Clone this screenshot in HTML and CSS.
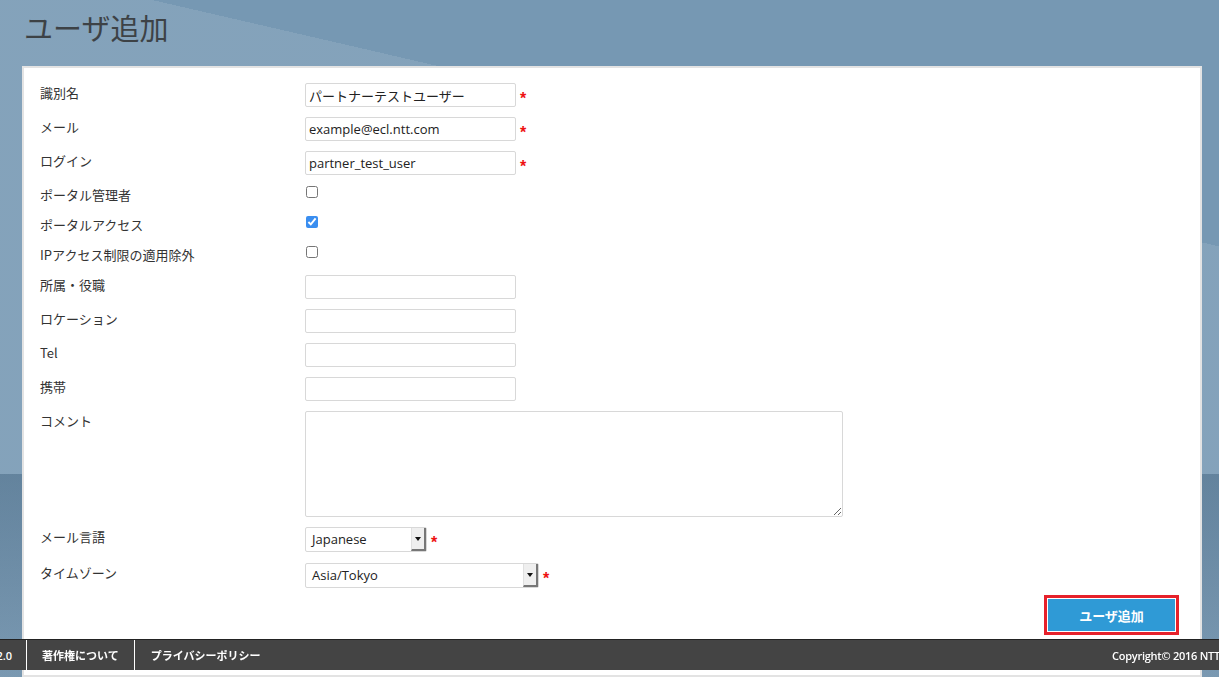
FILE: index.html
```html
<!DOCTYPE html>
<html lang="ja">
<head>
<meta charset="utf-8">
<title>ユーザ追加</title>
<link rel="stylesheet" href="styles.css">
</head>
<body>
<div class="page">
  <h1 class="title">ユーザ追加</h1>
  <div class="panel">
    <form class="form">
      <div class="row">
        <label class="lbl">識別名</label>
        <div class="field"><input class="text" type="text" value="パートナーテストユーザー"><span class="req">*</span></div>
      </div>
      <div class="row">
        <label class="lbl">メール</label>
        <div class="field"><input class="text" type="text" value="example@ecl.ntt.com"><span class="req">*</span></div>
      </div>
      <div class="row">
        <label class="lbl">ログイン</label>
        <div class="field"><input class="text" type="text" value="partner_test_user"><span class="req">*</span></div>
      </div>
      <div class="row row-check">
        <label class="lbl">ポータル管理者</label>
        <div class="field"><input class="check" type="checkbox"></div>
      </div>
      <div class="row row-check">
        <label class="lbl">ポータルアクセス</label>
        <div class="field"><input class="check" type="checkbox" checked></div>
      </div>
      <div class="row row-check">
        <label class="lbl">IPアクセス制限の適用除外</label>
        <div class="field"><input class="check" type="checkbox"></div>
      </div>
      <div class="row">
        <label class="lbl">所属・役職</label>
        <div class="field"><input class="text" type="text"></div>
      </div>
      <div class="row">
        <label class="lbl">ロケーション</label>
        <div class="field"><input class="text" type="text"></div>
      </div>
      <div class="row">
        <label class="lbl">Tel</label>
        <div class="field"><input class="text" type="text"></div>
      </div>
      <div class="row">
        <label class="lbl">携帯</label>
        <div class="field"><input class="text" type="text"></div>
      </div>
      <div class="row">
        <label class="lbl">コメント</label>
        <div class="field"><textarea class="area"></textarea></div>
      </div>
      <div class="row row-select">
        <label class="lbl">メール言語</label>
        <div class="field">
          <div class="select select-lang"><span class="select-val">Japanese</span><span class="select-arrow"><span class="tri"></span></span></div>
          <span class="req">*</span>
        </div>
      </div>
      <div class="row row-select">
        <label class="lbl">タイムゾーン</label>
        <div class="field">
          <div class="select select-tz"><span class="select-val">Asia/Tokyo</span><span class="select-arrow"><span class="tri"></span></span></div>
          <span class="req">*</span>
        </div>
      </div>
      <div class="actions">
        <button class="btn" type="button">ユーザ追加</button>
      </div>
    </form>
  </div>
</div>
<footer class="footer">
  <span class="f-item f-ver">2.0</span>
  <a class="f-item">著作権について</a>
  <a class="f-item f-last">プライバシーポリシー</a>
  <span class="f-copy">Copyright© 2016 NTT</span>
</footer>
</body>
</html>
```
FILE: styles.css
```css
html, body {
  margin: 0;
  height: 677px;
  overflow: hidden;
}

body {
  font-family: "Open Sans", "Noto Sans CJK JP", sans-serif;
  color: #333;
  background-color: #7698b3;
  background-image:
    linear-gradient(180deg, rgba(30, 65, 95, 0) 474px, rgba(30, 65, 95, 0.32) 474px, rgba(30, 65, 95, 0.1) 677px),
    linear-gradient(193deg, rgba(255, 255, 255, 0) 240px, rgba(255, 255, 255, 0.1) 240px);
}

.page {
  padding-left: 22px;
}

.title {
  margin: 0;
  height: 66px;
  box-sizing: border-box;
  padding: 7px 0 0 2px;
  font-size: 29px;
  line-height: 40px;
  font-weight: normal;
  color: #3d4246;
  font-family: "Noto Sans CJK JP", sans-serif;
}

.panel {
  width: 1180px;
  height: 611px;
  box-sizing: border-box;
  border: 2px solid #e3e3e3;
  background: #fff;
  padding: 15px 25px 0 16px;
}

.row {
  display: flex;
  align-items: flex-start;
  margin-bottom: 10px;
}

.row-select {
  margin-bottom: 11px;
}

.row-select:last-of-type {
  margin-bottom: 10px;
}

.lbl {
  flex: none;
  width: 265px;
  font-size: 13px;
  line-height: 20px;
  color: #333;
  font-family: "Noto Sans CJK JP", sans-serif;
}

.field {
  display: flex;
  align-items: flex-start;
}

.text {
  width: 211px;
  height: 24px;
  box-sizing: border-box;
  margin: 0;
  border: 1px solid #d8d8d8;
  border-radius: 2px;
  padding: 0 3px;
  font-family: "Open Sans", "Noto Sans CJK JP", sans-serif;
  font-size: 13px;
  color: #222;
  background: #fff;
  outline: none;
}

.req {
  margin-left: 4px;
  color: #ee1111;
  font-size: 16px;
  font-weight: bold;
  line-height: 32px;
  height: 24px;
  font-family: "Liberation Sans", sans-serif;
}

.row-select .req {
  line-height: 31px;
  height: 25px;
}

.row-check .field {
  height: 20px;
}

.check {
  width: 12px;
  height: 12px;
  margin: 1px 0 0 1px;
  accent-color: #3a8ef0;
}

.area {
  width: 538px;
  height: 106px;
  box-sizing: border-box;
  margin: 0;
  border: 1px solid #d8d8d8;
  border-radius: 2px;
  font-family: "Open Sans", sans-serif;
  font-size: 13px;
  resize: both;
  outline: none;
}

.select {
  display: flex;
  height: 25px;
  box-sizing: border-box;
  border: 1px solid #d8d8d8;
  border-radius: 2px;
  background: #fff;
}

.select-lang {
  width: 122px;
}

.select-tz {
  width: 234px;
}

.select-val {
  flex: 1;
  padding-left: 6px;
  font-size: 13px;
  line-height: 23px;
  color: #222;
  font-family: "Open Sans", sans-serif;
}

.select-arrow {
  flex: none;
  width: 15px;
  box-sizing: border-box;
  background: #efefef;
  border-left: 1px solid #e0e0e0;
  border-right: 2px solid #777;
  border-bottom: 2px solid #777;
  display: flex;
  align-items: center;
  justify-content: center;
}

.tri {
  width: 0;
  height: 0;
  border-left: 3px solid transparent;
  border-right: 3px solid transparent;
  border-top: 4px solid #111;
}

.actions {
  display: flex;
  justify-content: flex-end;
  margin-top: 10px;
}

.btn {
  width: 127px;
  height: 32px;
  border: none;
  border-radius: 0;
  background: #2f9ad6;
  color: #fff;
  font-family: "Noto Sans CJK JP", sans-serif;
  font-weight: bold;
  font-size: 13px;
  outline: 3px solid #e6212b;
  outline-offset: 1px;
}

.footer {
  position: fixed;
  left: 0;
  right: 0;
  bottom: 7px;
  height: 31px;
  box-sizing: border-box;
  border-top: 1px solid #222;
  background: #444;
  display: flex;
  align-items: stretch;
  color: #fff;
  font-family: "Noto Sans CJK JP", sans-serif;
  font-size: 11px;
  font-weight: bold;
}

.f-item {
  display: flex;
  align-items: center;
  padding: 0 15px;
  border-right: 1px solid #fff;
  color: #fff;
  text-decoration: none;
}

.f-ver {
  width: 27px;
  box-sizing: border-box;
  justify-content: flex-end;
  overflow: hidden;
  padding: 0 14px 0 0;
  font-family: "Open Sans", sans-serif;
  font-weight: 600;
  font-size: 11px;
}

.f-last {
  padding-left: 16px;
  border-right: none;
}

.f-copy {
  margin-left: auto;
  width: 107px;
  flex: none;
  white-space: nowrap;
  display: flex;
  align-items: center;
  font-family: "Open Sans", sans-serif;
  font-weight: 600;
  font-size: 11px;
  letter-spacing: -0.25px;
}
```
